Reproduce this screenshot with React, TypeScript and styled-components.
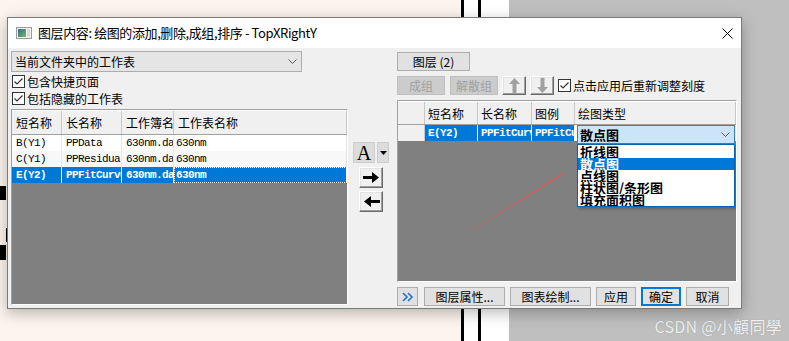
import React from 'react';
import styled, { createGlobalStyle } from 'styled-components';

const GlobalStyle = createGlobalStyle`
  html, body { margin: 0; padding: 0; overflow: hidden; background: #fcf4ee; }
  body {
    font-family: "Noto Sans CJK SC", "Noto Sans", sans-serif;
    font-size: 12px;
    color: #000;
  }
`;

const Desktop = styled.div`
  position: relative;
  width: 789px;
  height: 341px;
  display: flex;
  overflow: hidden;
`;

const Band = styled.div<{ $w?: number; $bg: string }>`
  flex: ${(p) => (p.$w ? `0 0 ${p.$w}px` : '1 1 auto')};
  background: ${(p) => p.$bg};
`;

const Mark = styled.div<{ $left: number; $top: number; $w: number; $h: number }>`
  position: absolute;
  left: ${(p) => p.$left}px;
  top: ${(p) => p.$top}px;
  width: ${(p) => p.$w}px;
  height: ${(p) => p.$h}px;
  background: #000;
`;

const Watermark = styled.div`
  position: absolute;
  right: 7px;
  bottom: 5px;
  font-size: 16px;
  line-height: 20px;
  color: rgba(255, 255, 255, 0.85);
  text-shadow: 0 0 1px rgba(120, 120, 120, 0.6);
  letter-spacing: 0.3px;
`;

/* ---------- dialog window ---------- */

const Dialog = styled.div`
  position: absolute;
  left: 7px;
  top: 17px;
  width: 735px;
  height: 292px;
  box-sizing: border-box;
  border: 1px solid #7a7a7a;
  background: #f0f0f0;
  box-shadow: 0 4px 14px rgba(0, 0, 0, 0.28);
  display: flex;
  flex-direction: column;
`;

const TitleBar = styled.div`
  flex: 0 0 30px;
  background: #fff;
  display: flex;
  align-items: center;
  padding-left: 8px;
  gap: 6px;
`;

const Title = styled.div`
  flex: 1;
  font-size: 13px;
  letter-spacing: -0.4px;
  line-height: 16px;
  white-space: nowrap;
`;

const CloseBtn = styled.div`
  width: 12px;
  height: 12px;
  margin-right: 8px;
  display: flex;
  align-items: center;
  justify-content: center;
`;

const Body = styled.div`
  flex: 1;
  display: flex;
  padding: 3px 4px 3px 3px;
  min-height: 0;
`;

const LeftCol = styled.div`
  flex: 0 0 337px;
  display: flex;
  flex-direction: column;
`;

const MidCol = styled.div`
  flex: 0 0 49px;
  display: flex;
  flex-direction: column;
  align-items: flex-start;
  padding-top: 91px;
`;

const RightCol = styled.div`
  flex: 0 0 340px;
  display: flex;
  flex-direction: column;
  gap: 5px;
  padding-top: 1px;
  margin-bottom: -1px;
`;

/* ---------- controls ---------- */

const Select = styled.div`
  width: 291px;
  height: 21px;
  box-sizing: border-box;
  border: 1px solid #adadad;
  background: #e5e5e5;
  display: flex;
  align-items: center;
  justify-content: space-between;
  padding: 0 4px 0 3px;
  line-height: 14px;
`;

const CheckRow = styled.label<{ $top?: number }>`
  display: flex;
  align-items: center;
  gap: 2px;
  height: 17px;
  margin-top: ${(p) => p.$top ?? 0}px;
  line-height: 14px;
  white-space: nowrap;
  padding-left: 1px;
`;

const Box = styled.span`
  width: 13px;
  height: 13px;
  box-sizing: border-box;
  border: 1px solid #333;
  background: #fff;
  display: inline-flex;
  flex: 0 0 auto;
`;

const Button = styled.div<{ $w: number; $disabled?: boolean; $primary?: boolean }>`
  flex: 0 0 ${(p) => p.$w}px;
  width: ${(p) => p.$w}px;
  height: 19px;
  box-sizing: border-box;
  border: ${(p) => (p.$primary ? '2px solid #0078d7' : `1px solid ${p.$disabled ? '#bfbfbf' : '#adadad'}`)};
  background: ${(p) => (p.$disabled ? '#cccccc' : '#e1e1e1')};
  color: ${(p) => (p.$disabled ? '#a0a0a0' : '#000')};
  display: flex;
  align-items: center;
  justify-content: center;
  line-height: 14px;
  white-space: nowrap;
`;

const BevelBtn = styled.div<{ $w: number; $h: number; $top?: number; $left?: number }>`
  width: ${(p) => p.$w}px;
  height: ${(p) => p.$h}px;
  box-sizing: border-box;
  margin-top: ${(p) => p.$top ?? 0}px;
  margin-left: ${(p) => p.$left ?? 0}px;
  background: #f0f0f0;
  border-top: 1px solid #fff;
  border-left: 1px solid #fff;
  border-right: 1px solid #696969;
  border-bottom: 1px solid #696969;
  box-shadow: inset -1px -1px 0 #a0a0a0, inset 1px 1px 0 #e3e3e3;
  display: flex;
  align-items: center;
  justify-content: center;
  flex: 0 0 auto;
`;

const FontGroup = styled.div`
  display: flex;
  gap: 2px;
  margin-left: 5px;
`;

const FlatBtn = styled.div<{ $w: number }>`
  width: ${(p) => p.$w}px;
  height: 21px;
  box-sizing: border-box;
  border: 1px solid #cdcdcd;
  background: #dcdcdc;
  display: flex;
  align-items: center;
  justify-content: center;
`;

const BigA = styled.span`
  font-family: "Liberation Serif", "DejaVu Serif", serif;
  font-size: 20px;
  line-height: 20px;
  margin-top: 1px;
`;

const ToolRow = styled.div`
  display: flex;
  align-items: center;
  gap: 5px;
  height: 19px;
`;

const ArrowPair = styled.div`
  display: flex;
  gap: 4px;
  margin-left: -1px;
`;

const Footer = styled.div`
  display: flex;
  gap: 5px;
  height: 19px;
`;

/* ---------- grids ---------- */

const Grid = styled.div`
  position: relative;
  flex: 1 1 auto;
  min-height: 0;
  box-sizing: border-box;
  border-top: 1px solid #a0a0a0;
  border-left: 1px solid #a0a0a0;
  border-right: 1px solid #fff;
  border-bottom: 1px solid #fff;
  background: #808080;
  overflow: hidden;
`;

const HeadRow = styled.div<{ $h: number }>`
  display: flex;
  height: ${(p) => p.$h}px;
  background: #f0f0f0;
  border-bottom: 1px solid #a0a0a0;
  border-top: 1px solid #fff;
  box-sizing: border-box;
`;

const Row = styled.div<{ $bg?: string }>`
  display: flex;
  height: 16px;
  background: ${(p) => p.$bg ?? '#fff'};
`;

const Cell = styled.div<{ $w?: number; $sel?: boolean; $head?: boolean; $focus?: boolean; $pad?: number }>`
  flex: ${(p) => (p.$w ? `0 0 ${p.$w}px` : '1 1 0')};
  min-width: 0;
  box-sizing: border-box;
  overflow: hidden;
  white-space: nowrap;
  padding-left: ${(p) => p.$pad ?? 4}px;
  display: flex;
  align-items: center;
  border-right: 1px solid ${(p) => (p.$sel ? '#fff' : p.$head ? '#c8c8c8' : '#e6e6e6')};
  background: ${(p) => (p.$sel ? '#0078d7' : 'transparent')};
  color: ${(p) => (p.$sel ? '#fff' : '#000')};
  font-family: ${(p) =>
    p.$head ? '"Noto Sans CJK SC", "Noto Sans", sans-serif' : '"Liberation Mono", "DejaVu Sans Mono", monospace'};
  font-size: ${(p) => (p.$head ? 12 : 11)}px;
  font-weight: ${(p) => (p.$sel ? 700 : 400)};
  letter-spacing: ${(p) => (p.$head ? 0 : -0.6)}px;
  outline: ${(p) => (p.$focus ? '1px dotted #fff' : 'none')};
  outline-offset: -1px;
`;

const RowHeader = styled.div<{ $w: number }>`
  flex: 0 0 ${(p) => p.$w}px;
  box-sizing: border-box;
  border-right: 1px solid #c8c8c8;
  background: #f0f0f0;
`;

const Combo = styled.div`
  position: absolute;
  left: 179px;
  top: 24px;
  width: 158px;
  height: 19px;
  box-sizing: border-box;
  border: 1px solid #3c7fb1;
  background: #cce4f7;
  display: flex;
  align-items: center;
  justify-content: space-between;
  padding: 0 4px 0 2px;
  font-size: 13px;
  font-weight: 700;
  line-height: 15px;
`;

const ListBox = styled.div`
  position: absolute;
  left: 179px;
  top: 43px;
  width: 158px;
  height: 63px;
  box-sizing: border-box;
  border: 1px solid #0a64ad;
  background: #fff;
  padding-top: 1px;
  box-shadow: 2px 2px 3px rgba(0, 0, 0, 0.25);
`;

const ListItem = styled.div<{ $sel?: boolean }>`
  height: 12px;
  line-height: 12px;
  overflow: hidden;
  padding-left: 2px;
  font-size: 13px;
  font-weight: 700;
  white-space: nowrap;
  background: ${(p) => (p.$sel ? '#0078d7' : 'transparent')};
  color: ${(p) => (p.$sel ? '#fff' : '#000')};
`;

const Pointer = styled.svg`
  position: absolute;
  left: 72px;
  top: 70px;
`;

/* ---------- drawings ---------- */

const Tick = () => (
  <Box>
    <svg width="11" height="11" viewBox="0 0 11 11">
      <path d="M1.5 5.5 L4 8 L9.5 2.5" fill="none" stroke="#333" strokeWidth="1.2" />
    </svg>
  </Box>
);

const Chevron = () => (
  <svg width="9" height="5" viewBox="0 0 9 5">
    <path d="M0.5 0.5 L4.5 4.5 L8.5 0.5" fill="none" stroke="#555" strokeWidth="1" />
  </svg>
);

const WinIcon = () => (
  <svg width="16" height="12" viewBox="0 0 16 12">
    <defs>
      <linearGradient id="wg" x1="0" y1="0" x2="1" y2="1">
        <stop offset="0" stopColor="#2f6f8f" />
        <stop offset="1" stopColor="#76b85a" />
      </linearGradient>
    </defs>
    <rect x="0.5" y="0.5" width="15" height="11" fill="#f4f4f4" stroke="#9a9a9a" />
    <rect x="2" y="2" width="8" height="8" fill="url(#wg)" />
    <rect x="11" y="2" width="3" height="8" fill="#dcdcdc" />
  </svg>
);

const HArrow = ({ dir }: { dir: 'left' | 'right' }) => (
  <svg width="17" height="11" viewBox="0 0 17 11" style={{ transform: dir === 'left' ? 'scaleX(-1)' : undefined }}>
    <path d="M0 4 H9 V0 L16 5.5 L9 11 V7 H0 Z" fill="#000" />
  </svg>
);

const VArrow = ({ dir }: { dir: 'up' | 'down' }) => (
  <svg width="11" height="15" viewBox="0 0 11 15" style={{ transform: dir === 'down' ? 'scaleY(-1)' : undefined }}>
    <path d="M5.5 0 L11 6 H7.5 V15 H3.5 V6 H0 Z" fill="#a0a0a0" />
  </svg>
);

const Expand = () => (
  <svg width="12" height="10" viewBox="0 0 12 10">
    <path d="M1 1 L5 5 L1 9 M6 1 L10 5 L6 9" fill="none" stroke="#1a73d9" strokeWidth="1.6" />
  </svg>
);

const leftCols = [50, 60, 52];
const leftRows = [
  { s: 'B(Y1)', l: 'PPData', b: '630nm.data', w: '630nm' },
  { s: 'C(Y1)', l: 'PPResidual', b: '630nm.data', w: '630nm', bg: '#f8f8f8' },
  { s: 'E(Y2)', l: 'PPFitCurve', b: '630nm.dat', w: '630nm', sel: true },
];

const App = () => {
  return (
    <>
      <GlobalStyle />
      <Desktop>
        <Band $w={461} $bg="#fcf4ee" />
        <Band $w={3} $bg="#000" />
        <Band $w={14} $bg="#fff" />
        <Band $w={3} $bg="#000" />
        <Band $w={28} $bg="#fff" />
        <Band $bg="#bfbfbf" />

        <Mark $left={0} $top={186} $w={6} $h={14} />
        <Mark $left={6} $top={228} $w={1} $h={14} />
        <Mark $left={0} $top={245} $w={6} $h={15} />

        <Watermark>CSDN @小顧同學</Watermark>

        <Dialog>
          <TitleBar>
            <WinIcon />
            <Title>图层内容: 绘图的添加,删除,成组,排序 - TopXRightY</Title>
            <CloseBtn>
              <svg width="11" height="11" viewBox="0 0 11 11">
                <path d="M0.5 0.5 L10.5 10.5 M10.5 0.5 L0.5 10.5" stroke="#000" strokeWidth="1" />
              </svg>
            </CloseBtn>
          </TitleBar>

          <Body>
            <LeftCol>
              <Select>
                <span>当前文件夹中的工作表</span>
                <Chevron />
              </Select>
              <CheckRow $top={1}>
                <Tick />
                包含快捷页面
              </CheckRow>
              <CheckRow>
                <Tick />
                包括隐藏的工作表
              </CheckRow>
              <Grid style={{ marginTop: 2 }}>
                <HeadRow $h={25}>
                  <Cell $head $w={leftCols[0]}>短名称</Cell>
                  <Cell $head $w={leftCols[1]}>长名称</Cell>
                  <Cell $head $w={leftCols[2]}>工作簿名</Cell>
                  <Cell $head>工作表名称</Cell>
                </HeadRow>
                {leftRows.map((r) => (
                  <Row key={r.s} $bg={r.bg}>
                    <Cell $sel={r.sel} $w={leftCols[0]}>{r.s}</Cell>
                    <Cell $sel={r.sel} $w={leftCols[1]}>{r.l}</Cell>
                    <Cell $sel={r.sel} $w={leftCols[2]}>{r.b}</Cell>
                    <Cell $sel={r.sel} $focus={r.sel} $pad={2}>{r.w}</Cell>
                  </Row>
                ))}
              </Grid>
            </LeftCol>

            <MidCol>
              <FontGroup>
                <FlatBtn $w={22}>
                  <BigA>A</BigA>
                </FlatBtn>
                <FlatBtn $w={12}>
                  <svg width="7" height="4" viewBox="0 0 7 4">
                    <path d="M0 0 H7 L3.5 4 Z" fill="#000" />
                  </svg>
                </FlatBtn>
              </FontGroup>
              <BevelBtn $w={24} $h={21} $top={4} $left={11}>
                <HArrow dir="right" />
              </BevelBtn>
              <BevelBtn $w={24} $h={21} $top={3} $left={11}>
                <HArrow dir="left" />
              </BevelBtn>
            </MidCol>

            <RightCol>
              <ToolRow>
                <Button $w={73}>图层 (2)</Button>
              </ToolRow>
              <ToolRow>
                <Button $w={48} $disabled>成组</Button>
                <Button $w={48} $disabled>解散组</Button>
                <ArrowPair>
                  <BevelBtn $w={24} $h={19}>
                    <VArrow dir="up" />
                  </BevelBtn>
                  <BevelBtn $w={24} $h={19}>
                    <VArrow dir="down" />
                  </BevelBtn>
                </ArrowPair>
                <CheckRow style={{ marginLeft: -2 }}>
                  <Tick />
                  点击应用后重新调整刻度
                </CheckRow>
              </ToolRow>

              <Grid>
                <HeadRow $h={24}>
                  <RowHeader $w={27} />
                  <Cell $head $w={53} $pad={3}>短名称</Cell>
                  <Cell $head $w={54} $pad={3}>长名称</Cell>
                  <Cell $head $w={43} $pad={3}>图例</Cell>
                  <Cell $head $pad={3}>绘图类型</Cell>
                </HeadRow>
                <Row>
                  <RowHeader $w={27} />
                  <Cell $sel $w={53} $pad={3}>E(Y2)</Cell>
                  <Cell $sel $w={54} $pad={3}>PPFitCurve</Cell>
                  <Cell $sel $w={43} $pad={3}>PPFitCurve</Cell>
                  <Cell />
                </Row>
                <Pointer width="100" height="64" viewBox="0 0 100 64">
                  <defs>
                    <linearGradient id="rl" x1="1" y1="0" x2="0" y2="1">
                      <stop offset="0" stopColor="#ff4a4a" stopOpacity="0.95" />
                      <stop offset="1" stopColor="#ff4a4a" stopOpacity="0.15" />
                    </linearGradient>
                  </defs>
                  <line x1="94" y1="2" x2="1" y2="60" stroke="url(#rl)" strokeWidth="1.3" />
                </Pointer>
                <Combo>
                  <span>散点图</span>
                  <Chevron />
                </Combo>
                <ListBox>
                  <ListItem>折线图</ListItem>
                  <ListItem $sel>散点图</ListItem>
                  <ListItem>点线图</ListItem>
                  <ListItem>柱状图/条形图</ListItem>
                  <ListItem>填充面积图</ListItem>
                </ListBox>
              </Grid>

              <Footer>
                <Button $w={21}>
                  <Expand />
                </Button>
                <Button $w={81} style={{ marginLeft: 1 }}>图层属性...</Button>
                <Button $w={81}>图表绘制...</Button>
                <Button $w={40}>应用</Button>
                <Button $w={40} $primary>确定</Button>
                <Button $w={43}>取消</Button>
              </Footer>
            </RightCol>
          </Body>
        </Dialog>
      </Desktop>
    </>
  );
};

export default App;
